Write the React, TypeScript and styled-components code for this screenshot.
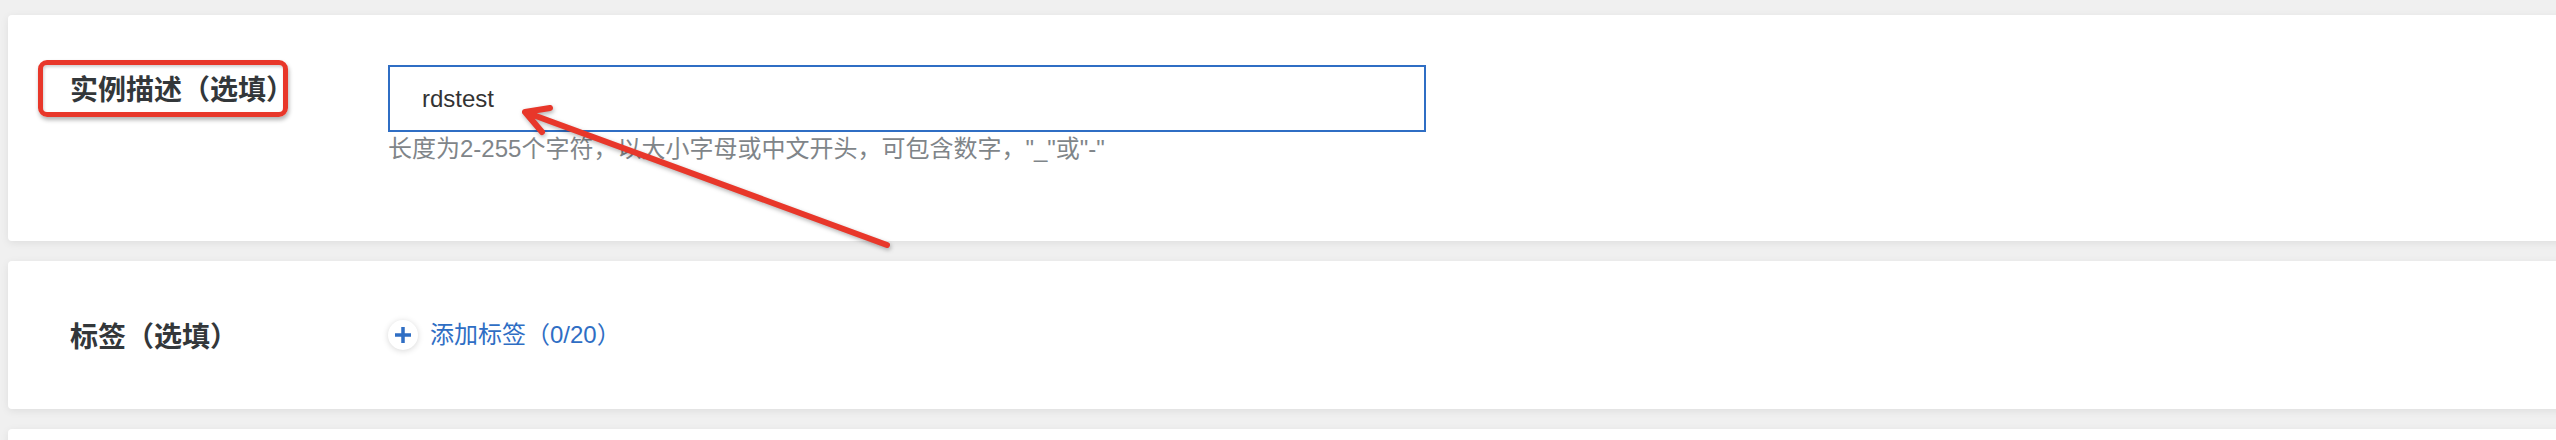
import React from 'react';
import styled, { createGlobalStyle } from 'styled-components';

const GlobalStyle = createGlobalStyle`
  html, body {
    margin: 0;
    padding: 0;
    background-color: #f0f0f0;
    overflow: hidden;
  }
  body {
    font-family: "Liberation Sans", "Noto Sans CJK SC", sans-serif;
  }
`;

// Page
const Page = styled.div`
  position: relative;
  display: flex;
  flex-direction: column;
  gap: 20px;
  padding: 15px 0 0 8px;
  height: 440px;
  box-sizing: border-box;
  overflow: hidden;
`;

const Card = styled.div<{ $height: number; $align?: string }>`
  position: relative;
  display: grid;
  grid-template-columns: 380px 1fr;
  align-items: ${(p) => p.$align || 'start'};
  height: ${(p) => p.$height}px;
  flex-shrink: 0;
  margin-right: -12px;
  padding: ${(p) => (p.$align === 'center' ? '0' : '50px 0 0 0')};
  box-sizing: border-box;
  background-color: #fff;
  border-radius: 4px;
  box-shadow: 0 2px 8px rgba(0, 0, 0, 0.08);
`;

const Label = styled.div<{ $offset?: number }>`
  padding-left: 62px;
  margin-top: ${(p) => p.$offset || 0}px;
  font-family: "Noto Sans CJK SC", sans-serif;
  font-size: 28px;
  font-weight: 700;
  line-height: 40px;
  color: #33373a;
`;

const Field = styled.div`
  display: flex;
  flex-direction: column;
`;

const Input = styled.input`
  width: 1038px;
  height: 67px;
  box-sizing: border-box;
  border: 2px solid #2f6ec4;
  border-radius: 0;
  padding: 0 0 0 32px;
  outline: none;
  font-family: "Liberation Sans", "Noto Sans CJK SC", sans-serif;
  font-size: 24px;
  color: #333;
  background: #fff;
`;

const Help = styled.div`
  font-size: 24px;
  line-height: 34px;
  color: #7f8589;
`;

const AddTag = styled.button`
  display: flex;
  align-items: center;
  gap: 12px;
  padding: 0;
  border: none;
  background: none;
  cursor: pointer;
  font-family: "Liberation Sans", "Noto Sans CJK SC", sans-serif;
  font-size: 24px;
  line-height: 34px;
  color: #2f6ec4;
`;

const PlusCircle = styled.span`
  display: flex;
  align-items: center;
  justify-content: center;
  width: 30px;
  height: 30px;
  border-radius: 50%;
  background: #fff;
  box-shadow: 0 1px 6px rgba(0, 0, 0, 0.16);
`;

// Annotations
const Highlight = styled.div`
  position: absolute;
  left: 30px;
  top: 45px;
  width: 250px;
  height: 57px;
  box-sizing: border-box;
  border: 5px solid #e8372a;
  border-radius: 9px;
  box-shadow: 1px 3px 4px rgba(0, 0, 0, 0.3), inset 1px 2px 3px rgba(0, 0, 0, 0.18);
  pointer-events: none;
`;

const Arrow = styled.svg`
  position: absolute;
  left: 500px;
  top: 90px;
  overflow: visible;
  filter: drop-shadow(1px 2px 2px rgba(0, 0, 0, 0.3));
  pointer-events: none;
`;

export default function App() {
  return (
    <>
      <GlobalStyle />
      <Page>
        <Card $height={226}>
          <Label $offset={3}>实例描述（选填）</Label>
          <Field>
            <Input defaultValue="rdstest" />
            <Help>长度为2-255个字符，以大小字母或中文开头，可包含数字，"_"或"-"</Help>
          </Field>
          <Highlight />
        </Card>
        <Card $height={148} $align="center">
          <Label>标签（选填）</Label>
          <div>
            <AddTag>
              <PlusCircle>
                <svg width="18" height="18" viewBox="0 0 18 18">
                  <path d="M9 1v16M1 9h16" stroke="#2f6ec4" strokeWidth="3.5" fill="none" />
                </svg>
              </PlusCircle>
              添加标签（0/20）
            </AddTag>
          </div>
        </Card>
        <Card $height={11} />
        <Arrow width="420" height="170" viewBox="0 0 420 170">
          <path
            d="M387 155 L25 22 M50 18 L25 22 L42 42"
            stroke="#e8372a"
            strokeWidth="6"
            strokeLinecap="round"
            strokeLinejoin="round"
            fill="none"
          />
        </Arrow>
      </Page>
    </>
  );
}
